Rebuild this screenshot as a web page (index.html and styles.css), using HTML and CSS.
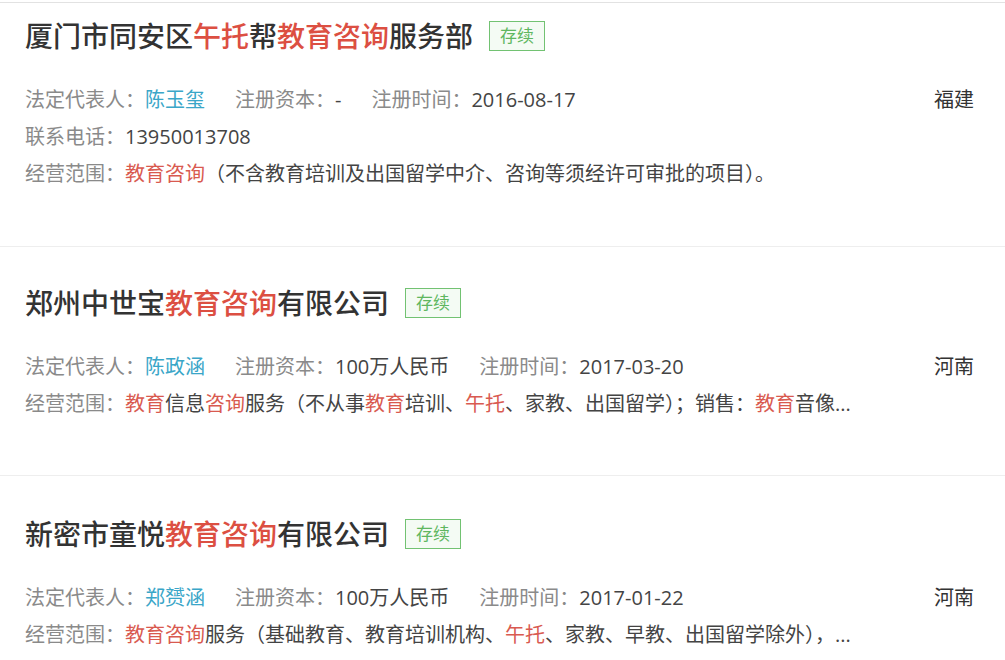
FILE: index.html
```html
<!DOCTYPE html>
<html lang="zh-CN">
<head>
  <meta charset="UTF-8" />
  <meta name="viewport" content="width=device-width, initial-scale=1.0"/>
  <title>企业搜索结果 - 教育咨询</title>
  <link rel="stylesheet" href="styles.css">
</head>
<body>
  <div class="list">
    <div class="card first">
      <div class="title">
        <h2>厦门市同安区<em>午托</em>帮<em>教育咨询</em>服务部</h2>
        <span class="badge">存续</span>
      </div>
      <div class="row">
        <span class="item">法定代表人：<a href="#">陈玉玺</a></span>
        <span class="item">注册资本：<b>-</b></span>
        <span class="item">注册时间：<b>2016-08-17</b></span>
        <span class="area">福建</span>
      </div>
      <div class="row">
        <span class="item">联系电话：<b>13950013708</b></span>
      </div>
      <div class="row">
        <span class="item">经营范围：<em>教育咨询</em><b>（不含教育培训及出国留学中介、咨询等须经许可审批的项目）。</b></span>
      </div>
    </div>

    <div class="card">
      <div class="title">
        <h2>郑州中世宝<em>教育咨询</em>有限公司</h2>
        <span class="badge">存续</span>
      </div>
      <div class="row">
        <span class="item">法定代表人：<a href="#">陈政涵</a></span>
        <span class="item">注册资本：<b>100万人民币</b></span>
        <span class="item">注册时间：<b>2017-03-20</b></span>
        <span class="area">河南</span>
      </div>
      <div class="row">
        <span class="item">经营范围：<em>教育</em><b>信息</b><em>咨询</em><b>服务（不从事</b><em>教育</em><b>培训、</b><em>午托</em><b>、家教、出国留学）；销售：</b><em>教育</em><b>音像...</b></span>
      </div>
    </div>

    <div class="card last">
      <div class="title">
        <h2>新密市童悦<em>教育咨询</em>有限公司</h2>
        <span class="badge">存续</span>
      </div>
      <div class="row">
        <span class="item">法定代表人：<a href="#">郑赟涵</a></span>
        <span class="item">注册资本：<b>100万人民币</b></span>
        <span class="item">注册时间：<b>2017-01-22</b></span>
        <span class="area">河南</span>
      </div>
      <div class="row">
        <span class="item">经营范围：<em>教育咨询</em><b>服务（基础教育、教育培训机构、</b><em>午托</em><b>、家教、早教、出国留学除外），...</b></span>
      </div>
    </div>
  </div>
</body>
</html>
```

FILE: styles.css
```css
* {
  box-sizing: border-box;
  margin: 0;
  padding: 0;
}

body {
  font-family: 'Open Sans', 'Noto Sans CJK SC', sans-serif;
  background: #fff;
  color: #333;
  padding-top: 2px;
}

.list {
  border-top: 1px solid #e2e2e2;
}

.card {
  padding: 36px 31px 53px 25px;
  border-bottom: 1px solid #eeeeee;
}

.card.first {
  padding-top: 13px;
  padding-bottom: 54px;
}

.card.last {
  padding-top: 38px;
  padding-bottom: 4px;
  border-bottom: none;
}

.title {
  display: flex;
  align-items: center;
  height: 40px;
  margin-bottom: 25px;
}

.title h2 {
  font-size: 28px;
  font-weight: 500;
  color: #333;
  line-height: 40px;
}

.title em,
.row em {
  font-style: normal;
  color: #dc4f42;
}

.row em {
  color: #d95a50;
}

.badge {
  margin-left: 16px;
  width: 56px;
  height: 30px;
  line-height: 28px;
  text-align: center;
  font-size: 17px;
  color: #5fb760;
  border: 1px solid #72c272;
  background: #f4fbf4;
}

.row {
  display: flex;
  gap: 30px;
  font-size: 20px;
  line-height: 37px;
  color: #8a8a8a;
  white-space: nowrap;
}

.row b {
  font-weight: normal;
  color: #444;
}

.row a {
  color: #3aa6c8;
  text-decoration: none;
}

.area {
  margin-left: auto;
  color: #333;
}
```
